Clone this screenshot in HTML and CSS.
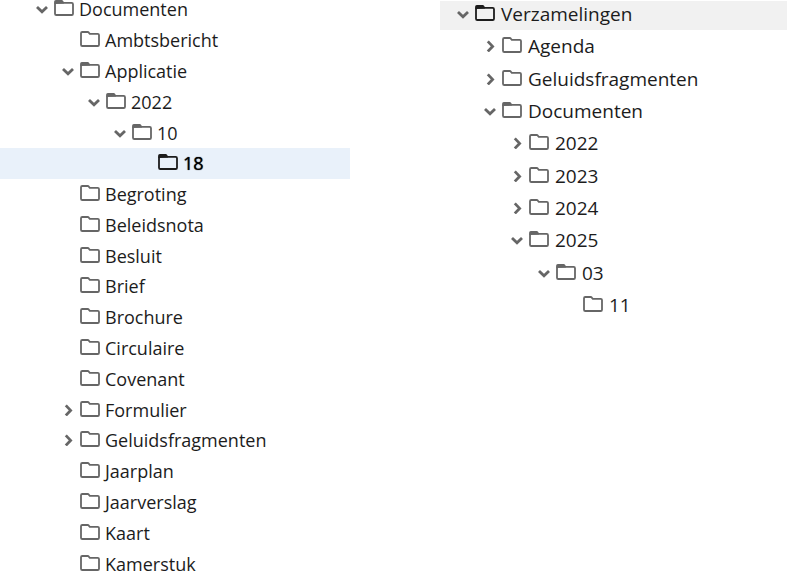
FILE: index.html
```
<!DOCTYPE html>
<html lang="nl">
<head>
<meta charset="utf-8">
<title>Mappen</title>
<link rel="stylesheet" href="styles.css">
</head>
<body>
<svg class="sprite" aria-hidden="true">
  <symbol id="folder" viewBox="0 0 20 16"><path d="M2.3 1H7.6Q8.4 1 8.8 1.6L9.8 2.8H17.7Q19 2.8 19 4.1V13.7Q19 15 17.7 15H2.3Q1 15 1 13.7V2.3Q1 1 2.3 1Z" fill="none" stroke="currentColor" stroke-width="1.8"/></symbol>
  <symbol id="folder-open" viewBox="0 0 20 16"><path d="M2.3 2.9H17.7Q19 2.9 19 4.2V13.7Q19 15 17.7 15H2.3Q1 15 1 13.7V4.2Q1 2.9 2.3 2.9Z" fill="none" stroke="currentColor" stroke-width="1.8"/><path d="M.1 4V1.8Q.1.1 1.8.1H7.8Q8.6.1 9 .8L10 2.2V3.6Z" fill="currentColor"/></symbol>
  <symbol id="down" viewBox="0 0 12 12"><path d="M1 4L6 8.8L11 4" fill="none" stroke="currentColor" stroke-width="2.8"/></symbol>
  <symbol id="right" viewBox="0 0 12 12"><path d="M3.8 1.4L8.6 6.4L3.8 11.4" fill="none" stroke="currentColor" stroke-width="2.8"/></symbol>
</svg>
<main class="panels">
  <ul class="tree tree-small" role="tree" aria-label="Documenten"></ul>
  <ul class="tree tree-large" role="tree" aria-label="Verzamelingen"></ul>
</main>
<script src="tree.js"></script>
</body>
</html>
```
FILE: styles.css
```
body {
  margin: 0;
  background: #fff;
  color: #1c1c1c;
  font-family: "Open Sans", "Noto Sans", sans-serif;
  overflow: hidden;
}

.sprite {
  position: absolute;
  width: 0;
  height: 0;
}

.panels {
  display: grid;
  grid-template-columns: 350fr 437fr;
  align-items: start;
}

.tree {
  display: grid;
  grid-auto-rows: 1fr;
  margin: 0;
  padding: 0;
  list-style: none;
}

.tree-small {
  --step: 26px;
  --start: 36px;
  --gap: 5px;
  height: 585px;
  margin-top: -6px;
  font-size: 18px;
}

.tree-large {
  --step: 27px;
  --start: 17px;
  --gap: 6px;
  height: 323px;
  margin-left: 90px;
  margin-top: -2px;
  font-size: 19px;
}

.item {
  display: flex;
  align-items: center;
  padding-left: calc(var(--start) + var(--level) * var(--step));
}

.tree-small .selected {
  background: #e9f1fa;
}

.tree-small .selected .label {
  color: #000;
  font-weight: 500;
  text-shadow: 0 0 1px #000;
}

.tree-large .selected {
  margin-top: 3px;
  padding-bottom: 3px;
  background: #f1f1f1;
}

.toggle {
  display: flex;
  width: 12px;
  height: 12px;
  margin-right: 6px;
  padding: 0;
  border: 0;
  background: none;
  color: #666;
}

.toggle-none {
  visibility: hidden;
}

.chevron {
  width: 12px;
  height: 12px;
}

.label {
  display: flex;
  align-items: center;
  gap: var(--gap);
  color: inherit;
  line-height: 18px;
  text-decoration: none;
}

.folder {
  width: 20px;
  height: 16px;
  margin-bottom: 2px;
  color: #666;
}

.selected .folder {
  color: #1c1c1c;
}
```
FILE: tree.js
```
const small = [
  ["Documenten", 0, "open"],
  ["Ambtsbericht", 1],
  ["Applicatie", 1, "open"],
  ["2022", 2, "open"],
  ["10", 3, "open"],
  ["18", 4, "selected"],
  ["Begroting", 1],
  ["Beleidsnota", 1],
  ["Besluit", 1],
  ["Brief", 1],
  ["Brochure", 1],
  ["Circulaire", 1],
  ["Covenant", 1],
  ["Formulier", 1, "closed"],
  ["Geluidsfragmenten", 1, "closed"],
  ["Jaarplan", 1],
  ["Jaarverslag", 1],
  ["Kaart", 1],
  ["Kamerstuk", 1]
];

const large = [
  ["Verzamelingen", 0, "open selected"],
  ["Agenda", 1, "closed"],
  ["Geluidsfragmenten", 1, "closed"],
  ["Documenten", 1, "open"],
  ["2022", 2, "closed"],
  ["2023", 2, "closed"],
  ["2024", 2, "closed"],
  ["2025", 2, "open"],
  ["03", 3, "open"],
  ["11", 4]
];

function row([name, level, state = ""]) {
  const open = state.includes("open");
  const closed = state.includes("closed");
  const selected = state.includes("selected");
  const folder = open || selected ? "folder-open" : "folder";
  const toggle = open || closed
    ? `<button class="toggle" type="button" aria-label="${name}"><svg class="chevron"><use href="#${open ? "down" : "right"}"/></svg></button>`
    : `<span class="toggle toggle-none"></span>`;
  return `<li class="item${selected ? " selected" : ""}" role="treeitem" aria-level="${level + 1}" style="--level:${level}">${toggle}<a class="label" href="#"><svg class="folder"><use href="#${folder}"/></svg><span>${name}</span></a></li>`;
}

document.querySelector(".tree-small").innerHTML = small.map(row).join("");
document.querySelector(".tree-large").innerHTML = large.map(row).join("");
```
